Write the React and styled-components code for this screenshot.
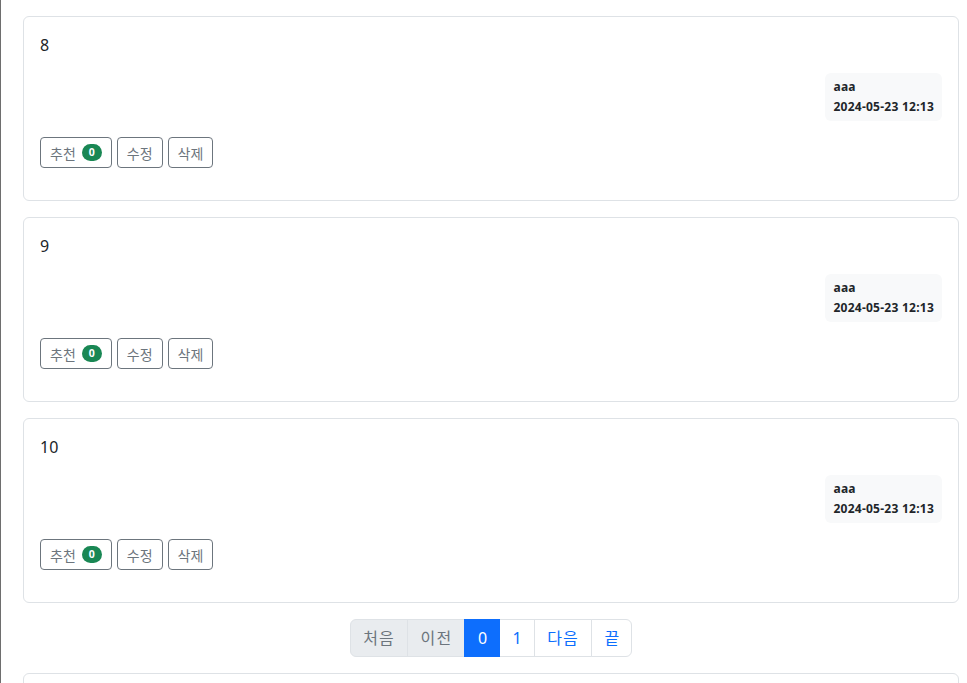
import React from 'react';
import styled, { createGlobalStyle } from 'styled-components';

const GlobalStyle = createGlobalStyle`
  html, body {
    margin: 0;
    padding: 0;
    background: #fff;
  }
  body {
    font-family: "Noto Sans", "Noto Sans CJK KR", sans-serif;
    font-size: 16px;
    line-height: 1.5;
    color: #212529;
  }
`;

const Page = styled.div`
  border-left: 1px solid #6e6e6e;
  padding: 16px 8px 0 22px;
  height: 683px;
  overflow: hidden;
  box-sizing: border-box;
`;

const Card = styled.div`
  border: 1px solid #dee2e6;
  border-radius: 6px;
  padding: 16px;
  margin-bottom: 16px;
  min-height: ${({ $empty }) => ($empty ? '150px' : 'auto')};
`;

const CardText = styled.div`
  height: 24px;
  margin-bottom: 16px;
  font-size: 16px;
  line-height: 24px;
`;

const AuthorRow = styled.div`
  display: flex;
  justify-content: flex-end;
`;

const Author = styled.div`
  background: #f8f9fa;
  border-radius: 6px;
  padding: 8px;
  font-size: 12px;
  font-weight: 700;
  line-height: 1;
  letter-spacing: 0.25px;
  color: #212529;
`;

const AuthorName = styled.div`
  margin-bottom: 8px;
`;

const Actions = styled.div`
  display: flex;
  gap: 5px;
  margin: 16px 0;
`;

const Button = styled.button`
  display: inline-flex;
  align-items: center;
  gap: 6px;
  height: 31px;
  padding: 0 9px;
  font-family: inherit;
  font-size: 14px;
  color: #6c757d;
  background: #fff;
  border: 1px solid #6c757d;
  border-radius: 4px;
`;

const Count = styled.span`
  display: inline-block;
  background: #198754;
  color: #fff;
  font-size: 10.5px;
  font-weight: 700;
  line-height: 1;
  padding: 3.5px 7px;
  border-radius: 10px;
`;

const Pager = styled.ul`
  display: flex;
  justify-content: center;
  list-style: none;
  margin: 0 0 16px;
  padding: 0;
`;

const PageItem = styled.li`
  padding: 6px 12px 6px 12.5px;
  font-size: 16px;
  line-height: 24px;
  letter-spacing: ${({ $ko }) => ($ko ? '1.2px' : '0')};
  border: 1px solid ${({ $active }) => ($active ? '#0d6efd' : '#dee2e6')};
  margin-left: -1px;
  color: ${({ $active, $disabled }) => ($active ? '#fff' : $disabled ? '#6c757d' : '#0d6efd')};
  background: ${({ $active, $disabled }) => ($active ? '#0d6efd' : $disabled ? '#e9ecef' : '#fff')};
  position: relative;
  z-index: ${({ $active }) => ($active ? 1 : 0)};

  &:first-child {
    margin-left: 0;
    border-radius: 6px 0 0 6px;
  }
  &:last-child {
    border-radius: 0 6px 6px 0;
  }
`;

const posts = ['8', '9', '10'];

const Post = ({ text }) => (
  <Card>
    <CardText>{text}</CardText>
    <AuthorRow>
      <Author>
        <AuthorName>aaa</AuthorName>
        <div>2024-05-23 12:13</div>
      </Author>
    </AuthorRow>
    <Actions>
      <Button>
        추천 <Count>0</Count>
      </Button>
      <Button>수정</Button>
      <Button>삭제</Button>
    </Actions>
  </Card>
);

const App = () => (
  <>
    <GlobalStyle />
    <Page>
      {posts.map((p) => (
        <Post key={p} text={p} />
      ))}
      <Pager>
        <PageItem $ko $disabled>처음</PageItem>
        <PageItem $ko $disabled>이전</PageItem>
        <PageItem $active>0</PageItem>
        <PageItem>1</PageItem>
        <PageItem $ko>다음</PageItem>
        <PageItem>끝</PageItem>
      </Pager>
      <Card $empty />
    </Page>
  </>
);

export default App;
